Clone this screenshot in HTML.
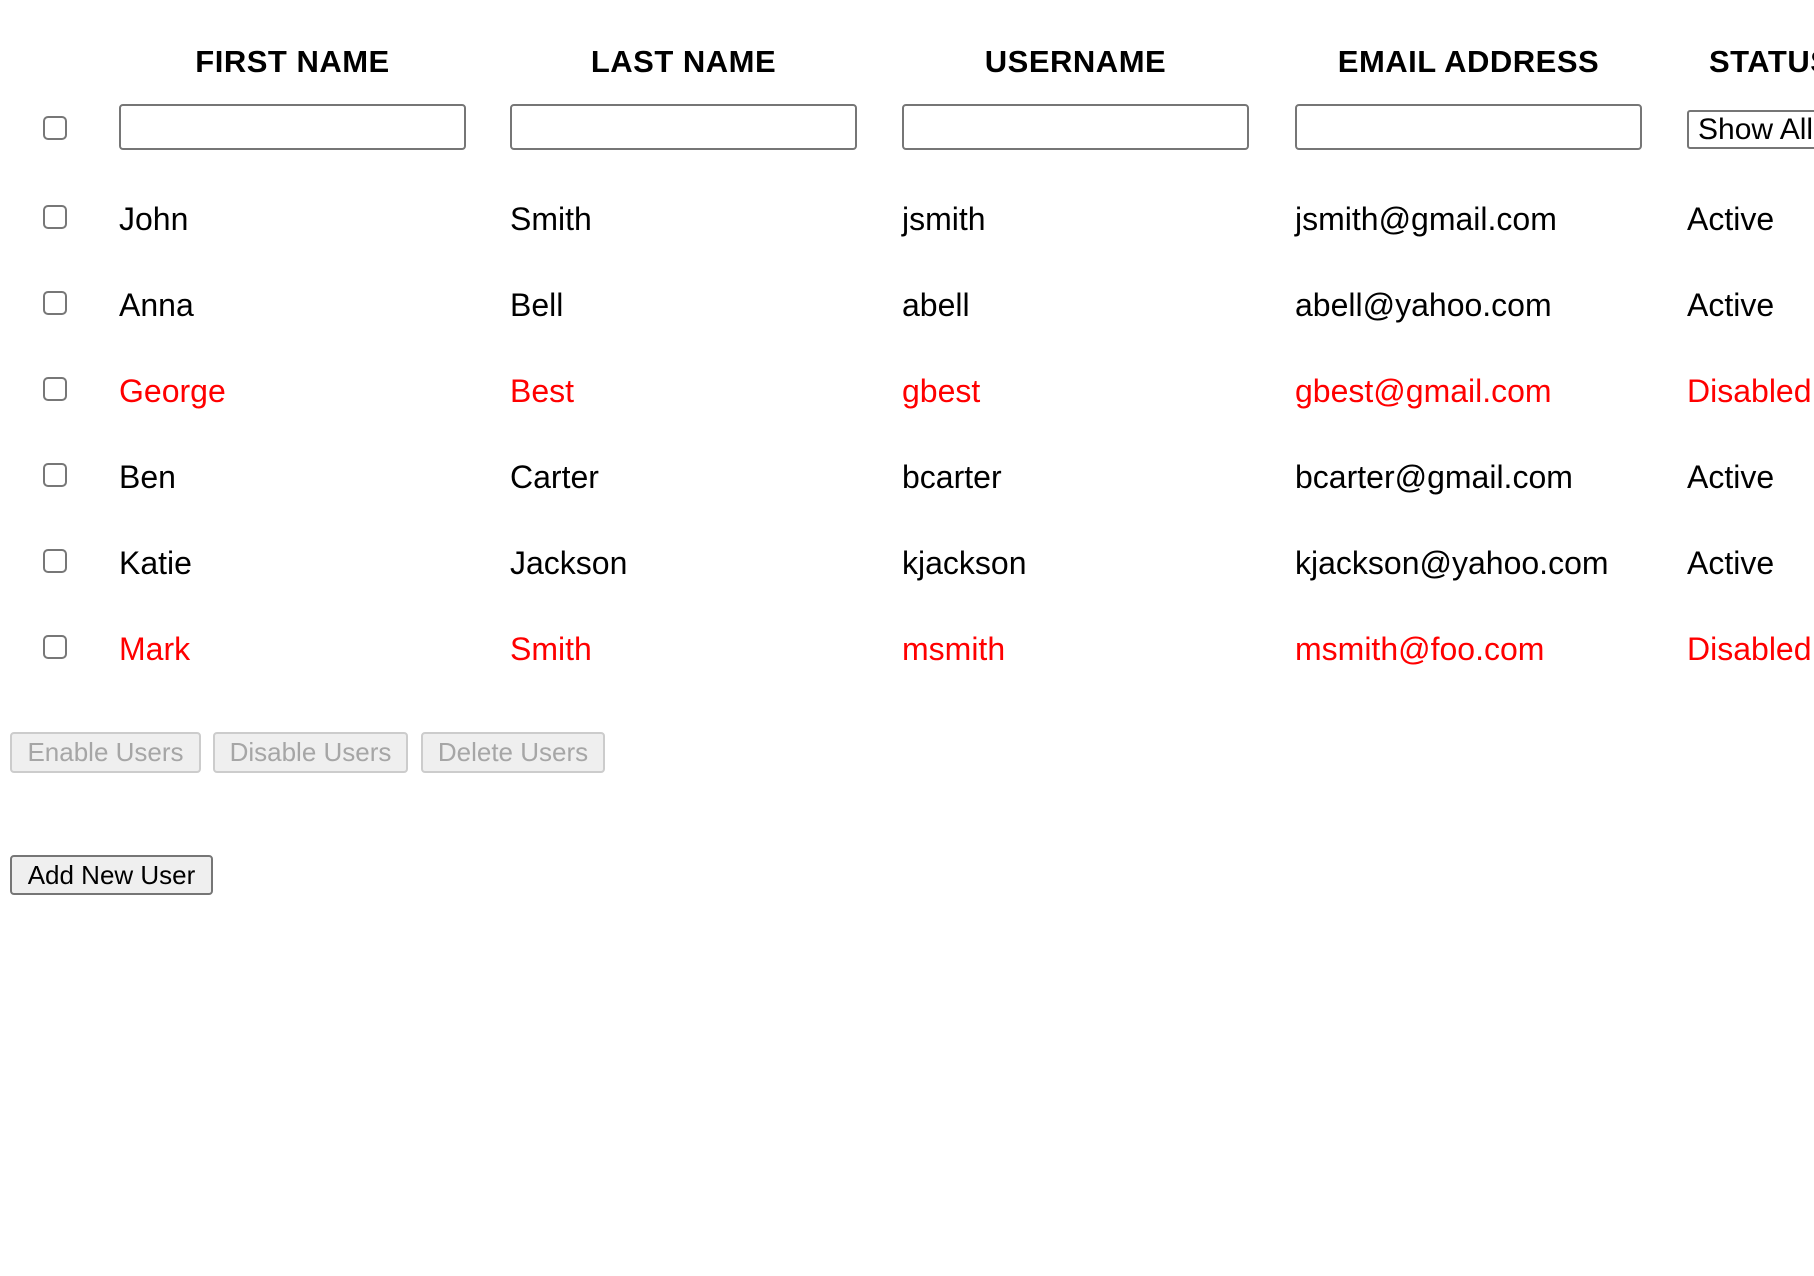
<!DOCTYPE html>
<html><head><style>
body{margin:0;width:1814px;height:1276px;background:#fff;font-family:"Liberation Sans",sans-serif;overflow:hidden;position:relative}
.a{position:absolute;white-space:nowrap}
.h{font-weight:bold;font-size:31px;top:44px;text-align:center;width:347px;letter-spacing:0.5px}
.cb{position:absolute;left:43px;border:2px solid #777;border-radius:5px;box-sizing:border-box;width:24px;height:24px}
.in{position:absolute;top:104px;height:46px;width:347px;border:2px solid #767676;border-radius:4px;box-sizing:border-box}
.d{font-size:32px;color:#000;line-height:36px}
.r{color:#ff0000}
.btn{position:absolute;height:41px;box-sizing:border-box;border:2px solid #ccc;border-radius:4px;background:#efefef;color:#a6a6a6;font-size:26px;line-height:37px;text-align:center}
</style></head><body>
<div class="a h" style="left:119px">FIRST NAME</div>
<div class="a h" style="left:510px">LAST NAME</div>
<div class="a h" style="left:902px">USERNAME</div>
<div class="a h" style="left:1295px">EMAIL ADDRESS</div>
<div class="a" style="left:1709px;top:44px;font-weight:bold;font-size:31px;letter-spacing:0.5px">STATUS</div>
<div class="cb" style="top:116px"></div>
<div class="in" style="left:119px"></div>
<div class="in" style="left:510px"></div>
<div class="in" style="left:902px"></div>
<div class="in" style="left:1295px"></div>
<div class="a" style="left:1687px;top:110px;width:160px;height:39px;border:2px solid #767676;border-radius:3px;box-sizing:border-box;font-size:30px;line-height:35px;padding-left:9px">Show All</div>

<div class="cb" style="top:205px"></div>
<div class="a d" style="left:119px;top:201px">John</div><div class="a d" style="left:510px;top:201px">Smith</div><div class="a d" style="left:902px;top:201px">jsmith</div><div class="a d" style="left:1295px;top:201px">jsmith@gmail.com</div><div class="a d" style="left:1687px;top:201px">Active</div>

<div class="cb" style="top:291px"></div>
<div class="a d" style="left:119px;top:287px">Anna</div><div class="a d" style="left:510px;top:287px">Bell</div><div class="a d" style="left:902px;top:287px">abell</div><div class="a d" style="left:1295px;top:287px">abell@yahoo.com</div><div class="a d" style="left:1687px;top:287px">Active</div>

<div class="cb" style="top:377px"></div>
<div class="a d r" style="left:119px;top:373px">George</div><div class="a d r" style="left:510px;top:373px">Best</div><div class="a d r" style="left:902px;top:373px">gbest</div><div class="a d r" style="left:1295px;top:373px">gbest@gmail.com</div><div class="a d r" style="left:1687px;top:373px">Disabled</div>

<div class="cb" style="top:463px"></div>
<div class="a d" style="left:119px;top:459px">Ben</div><div class="a d" style="left:510px;top:459px">Carter</div><div class="a d" style="left:902px;top:459px">bcarter</div><div class="a d" style="left:1295px;top:459px">bcarter@gmail.com</div><div class="a d" style="left:1687px;top:459px">Active</div>

<div class="cb" style="top:549px"></div>
<div class="a d" style="left:119px;top:545px">Katie</div><div class="a d" style="left:510px;top:545px">Jackson</div><div class="a d" style="left:902px;top:545px">kjackson</div><div class="a d" style="left:1295px;top:545px">kjackson@yahoo.com</div><div class="a d" style="left:1687px;top:545px">Active</div>

<div class="cb" style="top:635px"></div>
<div class="a d r" style="left:119px;top:631px">Mark</div><div class="a d r" style="left:510px;top:631px">Smith</div><div class="a d r" style="left:902px;top:631px">msmith</div><div class="a d r" style="left:1295px;top:631px">msmith@foo.com</div><div class="a d r" style="left:1687px;top:631px">Disabled</div>

<div class="btn" style="left:10px;top:732px;width:191px">Enable Users</div>
<div class="btn" style="left:213px;top:732px;width:195px">Disable Users</div>
<div class="btn" style="left:421px;top:732px;width:184px">Delete Users</div>
<div class="btn" style="left:10px;top:855px;width:203px;height:40px;border-color:#767676;color:#000">Add New User</div>
</body></html>
